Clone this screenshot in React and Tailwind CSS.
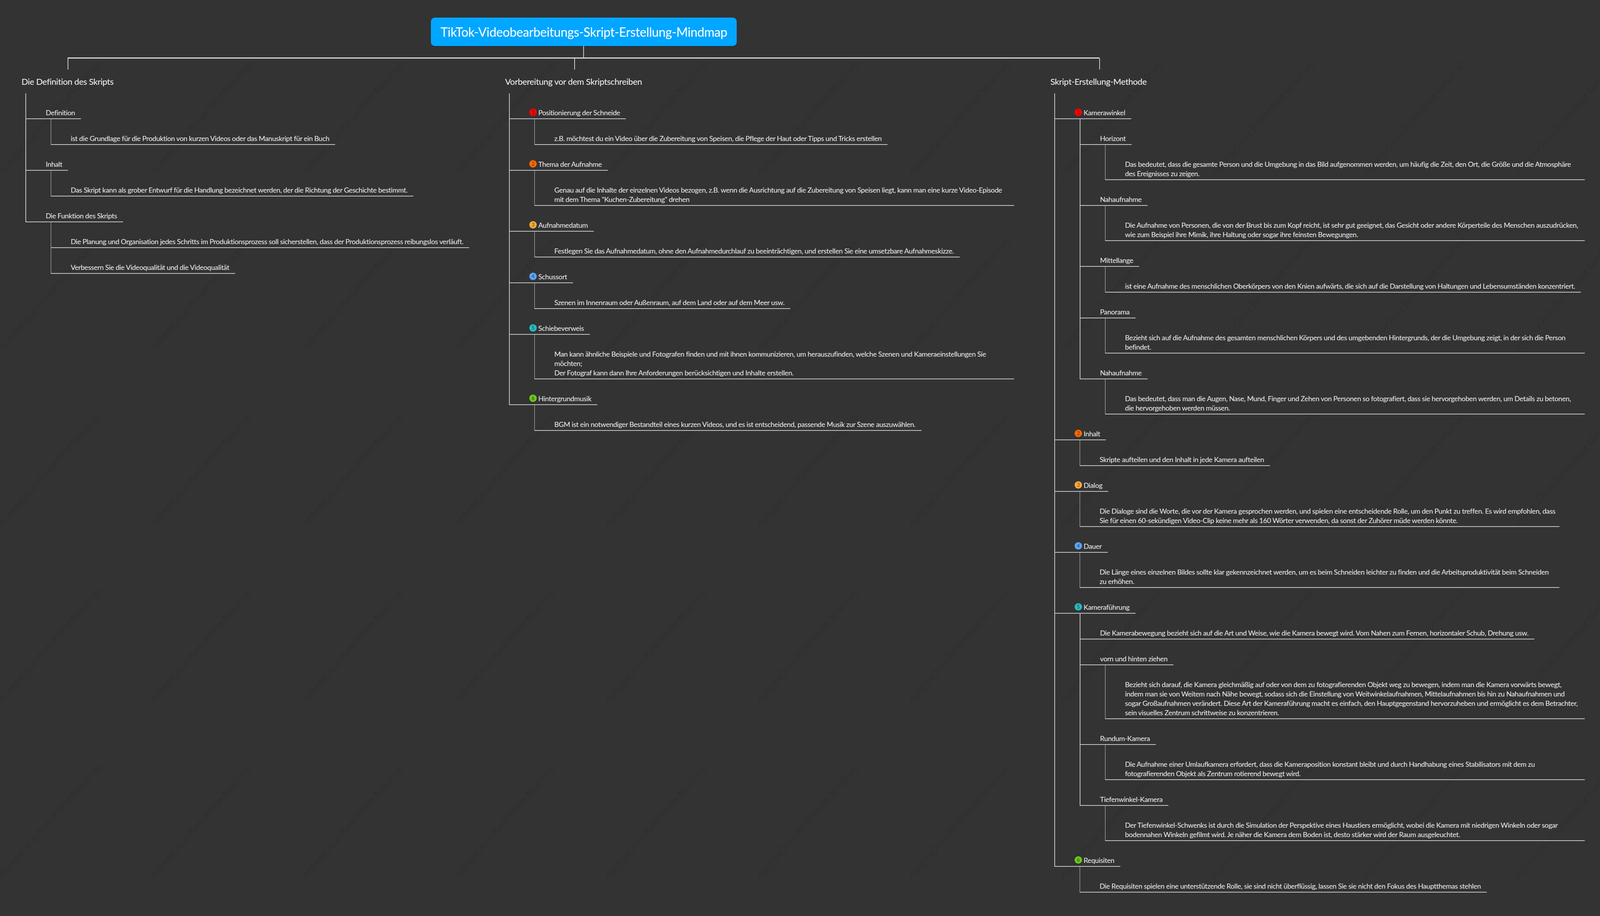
import React from "react";

const LINE = "border-[#bfc4c8]";

const BADGES = {
  1: "bg-[#ff0000]",
  2: "bg-[#ff6a00]",
  3: "bg-[#ffa93a]",
  4: "bg-[#5aa6ff]",
  5: "bg-[#26bdc0]",
  6: "bg-[#6cc81e]",
};

const columns = [
  {
    title: "Die Definition des Skripts",
    width: "w-[1238px]",
    tick: "ml-[118px]",
    nodes: [
      {
        text: ["Definition"],
        children: [
          { text: ["ist die Grundlage für die Produktion von kurzen Videos oder das Manuskript für ein Buch"] },
        ],
      },
      {
        text: ["Inhalt"],
        children: [
          { text: ["Das Skript kann als grober Entwurf für die Handlung bezeichnet werden, der die Richtung der Geschichte bestimmt."] },
        ],
      },
      {
        text: ["Die Funktion des Skripts"],
        children: [
          { text: ["Die Planung und Organisation jedes Schritts im Produktionsprozess soll sicherstellen, dass der Produktionsprozess reibungslos verläuft."] },
          { text: ["Verbessern Sie die Videoqualität und die Videoqualität"] },
        ],
      },
    ],
  },
  {
    title: "Vorbereitung vor dem Skriptschreiben",
    width: "w-[1396px]",
    tick: "ml-[177px]",
    nodes: [
      {
        badge: 1,
        text: ["Positionierung der Schneide"],
        children: [
          { text: ["z.B. möchtest du ein Video über die Zubereitung von Speisen, die Pflege der Haut oder Tipps und Tricks erstellen"] },
        ],
      },
      {
        badge: 2,
        text: ["Thema der Aufnahme"],
        children: [
          {
            text: [
              "Genau auf die Inhalte der einzelnen Videos bezogen, z.B. wenn die Ausrichtung auf die Zubereitung von Speisen liegt, kann man eine kurze Video-Episode",
              "mit dem Thema \"Kuchen-Zubereitung\" drehen",
            ],
          },
        ],
      },
      {
        badge: 3,
        text: ["Aufnahmedatum"],
        children: [
          { text: ["Festlegen Sie das Aufnahmedatum, ohne den Aufnahmedurchlauf zu beeinträchtigen, und erstellen Sie eine umsetzbare Aufnahmeskizze."] },
        ],
      },
      {
        badge: 4,
        text: ["Schussort"],
        children: [
          { text: ["Szenen im Innenraum oder Außenraum, auf dem Land oder auf dem Meer usw."] },
        ],
      },
      {
        badge: 5,
        text: ["Schiebeverweis"],
        children: [
          {
            text: [
              "Man kann ähnliche Beispiele und Fotografen finden und mit ihnen kommunizieren, um herauszufinden, welche Szenen und Kameraeinstellungen Sie",
              "möchten;",
              "Der Fotograf kann dann Ihre Anforderungen berücksichtigen und Inhalte erstellen.",
            ],
          },
        ],
      },
      {
        badge: 6,
        text: ["Hintergrundmusik"],
        children: [
          { text: ["BGM ist ein notwendiger Bestandteil eines kurzen Videos, und es ist entscheidend, passende Musik zur Szene auszuwählen."] },
        ],
      },
    ],
  },
  {
    title: "Skript-Erstellung-Methode",
    width: "w-[1380px]",
    tick: "ml-[125px]",
    nodes: [
      {
        badge: 1,
        text: ["Kamerawinkel"],
        children: [
          {
            text: ["Horizont"],
            children: [
              {
                text: [
                  "Das bedeutet, dass die gesamte Person und die Umgebung in das Bild aufgenommen werden, um häufig die Zeit, den Ort, die Größe und die Atmosphäre",
                  "des Ereignisses zu zeigen.",
                ],
              },
            ],
          },
          {
            text: ["Nahaufnahme"],
            children: [
              {
                text: [
                  "Die Aufnahme von Personen, die von der Brust bis zum Kopf reicht, ist sehr gut geeignet, das Gesicht oder andere Körperteile des Menschen auszudrücken,",
                  "wie zum Beispiel ihre Mimik, ihre Haltung oder sogar ihre feinsten Bewegungen.",
                ],
              },
            ],
          },
          {
            text: ["Mittellange"],
            children: [
              { text: ["ist eine Aufnahme des menschlichen Oberkörpers von den Knien aufwärts, die sich auf die Darstellung von Haltungen und Lebensumständen konzentriert."] },
            ],
          },
          {
            text: ["Panorama"],
            children: [
              {
                text: [
                  "Bezieht sich auf die Aufnahme des gesamten menschlichen Körpers und des umgebenden Hintergrunds, der die Umgebung zeigt, in der sich die Person",
                  "befindet.",
                ],
              },
            ],
          },
          {
            text: ["Nahaufnahme"],
            children: [
              {
                text: [
                  "Das bedeutet, dass man die Augen, Nase, Mund, Finger und Zehen von Personen so fotografiert, dass sie hervorgehoben werden, um Details zu betonen,",
                  "die hervorgehoben werden müssen.",
                ],
              },
            ],
          },
        ],
      },
      {
        badge: 2,
        text: ["Inhalt"],
        children: [{ text: ["Skripte aufteilen und den Inhalt in jede Kamera aufteilen"] }],
      },
      {
        badge: 3,
        text: ["Dialog"],
        children: [
          {
            text: [
              "Die Dialoge sind die Worte, die vor der Kamera gesprochen werden, und spielen eine entscheidende Rolle, um den Punkt zu treffen. Es wird empfohlen, dass",
              "Sie für einen 60-sekündigen Video-Clip keine mehr als 160 Wörter verwenden, da sonst der Zuhörer müde werden könnte.",
            ],
          },
        ],
      },
      {
        badge: 4,
        text: ["Dauer"],
        children: [
          {
            text: [
              "Die Länge eines einzelnen Bildes sollte klar gekennzeichnet werden, um es beim Schneiden leichter zu finden und die Arbeitsproduktivität beim Schneiden",
              "zu erhöhen.",
            ],
          },
        ],
      },
      {
        badge: 5,
        text: ["Kameraführung"],
        children: [
          { text: ["Die Kamerabewegung bezieht sich auf die Art und Weise, wie die Kamera bewegt wird. Vom Nahen zum Fernen, horizontaler Schub, Drehung usw."] },
          {
            text: ["vorn und hinten ziehen"],
            children: [
              {
                text: [
                  "Bezieht sich darauf, die Kamera gleichmäßig auf oder von dem zu fotografierenden Objekt weg zu bewegen, indem man die Kamera vorwärts bewegt,",
                  "indem man sie von Weitem nach Nähe bewegt, sodass sich die Einstellung von Weitwinkelaufnahmen, Mittelaufnahmen bis hin zu Nahaufnahmen und",
                  "sogar Großaufnahmen verändert. Diese Art der Kameraführung macht es einfach, den Hauptgegenstand hervorzuheben und ermöglicht es dem Betrachter,",
                  "sein visuelles Zentrum schrittweise zu konzentrieren.",
                ],
              },
            ],
          },
          {
            text: ["Rundum-Kamera"],
            children: [
              {
                text: [
                  "Die Aufnahme einer Umlaufkamera erfordert, dass die Kameraposition konstant bleibt und durch Handhabung eines Stabilisators mit dem zu",
                  "fotografierenden Objekt als Zentrum rotierend bewegt wird.",
                ],
              },
            ],
          },
          {
            text: ["Tiefenwinkel-Kamera"],
            children: [
              {
                text: [
                  "Der Tiefenwinkel-Schwenks ist durch die Simulation der Perspektive eines Haustiers ermöglicht, wobei die Kamera mit niedrigen Winkeln oder sogar",
                  "bodennahen Winkeln gefilmt wird. Je näher die Kamera dem Boden ist, desto stärker wird der Raum ausgeleuchtet.",
                ],
              },
            ],
          },
        ],
      },
      {
        badge: 6,
        text: ["Requisiten"],
        children: [
          { text: ["Die Requisiten spielen eine unterstützende Rolle, sie sind nicht überflüssig, lassen Sie sie nicht den Fokus des Hauptthemas stehlen"] },
        ],
      },
    ],
  },
];

// one row of the tree: the label with its underline, then its children
const TreeNode = ({ node, thick, last }) => {
  const kids = node.children || [];
  const kidsThick = kids.some((kid) => kid.children);

  return (
    <div>
      <div
        className={`${node.text.length > 1 ? "w-[1228px]" : "w-fit"} ${
          thick ? "border-l-2" : "border-l"
        } ${LINE} border-b-2 pl-[50px] pr-[15px] pt-[37px] pb-[3px] whitespace-nowrap`}
      >
        {node.badge ? (
          <div className="flex items-center gap-[4px]">
            <span
              className={`${BADGES[node.badge]} flex h-[19px] w-[19px] -translate-y-px items-center justify-center rounded-full text-[13px] tracking-normal text-[#000000a0]`}
            >
              {node.badge}
            </span>
            <span>{node.text[0]}</span>
          </div>
        ) : (
          node.text.map((line, i) => <div key={i}>{line}</div>)
        )}
      </div>

      {kids.length > 0 && (
        <div
          className={`${thick ? "border-l-2 pl-[63px]" : "border-l pl-[64px]"} ${
            last ? "border-transparent" : LINE
          }`}
        >
          {kids.map((kid, i) => (
            <TreeNode key={i} node={kid} thick={kidsThick} last={i === kids.length - 1} />
          ))}
        </div>
      )}
    </div>
  );
};

const Watermark = () => (
  <svg className="absolute inset-0 h-full w-full" aria-hidden="true">
    <defs>
      <pattern id="mark" x="0" y="106" width="388.3" height="450" patternUnits="userSpaceOnUse">
        <text
          x="2"
          y="350"
          transform="rotate(-48.6 2 350)"
          fontFamily="Liberation Sans, Arial, sans-serif"
          fontSize="25.6"
          fill="#2e2e2e"
        >
          ProcessOn.io Kostenlose Mindmap
        </text>
      </pattern>
    </defs>
    <rect width="100%" height="100%" fill="url(#mark)" />
  </svg>
);

const App = () => {
  return (
    <div className="relative min-h-screen w-full overflow-hidden bg-[#333333] font-['Lato','Open_Sans',sans-serif] text-[18px] leading-[24px] tracking-[-0.4px] text-[#ececec]">
      <Watermark />

      <div className="relative pt-[45px]">
        {/* root topic */}
        <div className="ml-[1103px] flex h-[73px] w-[783px] items-center justify-center rounded-[10px] bg-[#00a6ff] text-[32px] whitespace-nowrap text-white shadow-[0_1px_1px_rgba(0,0,0,0.45)]">
          TikTok-Videobearbeitungs-Skript-Erstellung-Mindmap
        </div>
        <div className="ml-[1493px] h-[29px] w-[2px] bg-[#c8c8c8]" />
        <div className="ml-[173px] h-[3px] w-[2642px] bg-[#d8d8d8]" />

        <div className="flex pl-[55px]">
          {columns.map((col) => (
            <div key={col.title} className={`${col.width} shrink-0`}>
              <div className={`${col.tick} h-[28px] w-[2px] bg-[#c8c8c8]`} />
              <div className="pt-[15px] pb-[14px] text-[22px] leading-[32px] whitespace-nowrap text-[#f2f2f2]">
                {col.title}
              </div>
              <div className="ml-[10px]">
                {col.nodes.map((node, i) => (
                  <TreeNode key={i} node={node} thick last={i === col.nodes.length - 1} />
                ))}
              </div>
            </div>
          ))}
        </div>
      </div>
    </div>
  );
};

export default App;
